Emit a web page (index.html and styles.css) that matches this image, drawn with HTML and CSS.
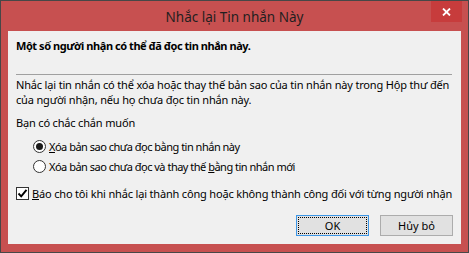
FILE: index.html
```html
<!DOCTYPE html>
<html lang="vi">
<head>
<meta charset="utf-8">
<title>Nhắc lại Tin nhắn Này</title>
<link rel="stylesheet" href="styles.css">
</head>
<body>
<div class="window">
  <div class="titlebar">
    <span class="spacer"></span>
    <span class="title">Nhắc lại Tin nhắn Này</span>
    <span class="controls">
      <span class="close" aria-label="Đóng">
        <svg width="9" height="8" viewBox="0 0 9 8"><path d="M1 0.5 L8 7.5 M8 0.5 L1 7.5" stroke="#fff" stroke-width="1.8" fill="none"/></svg>
      </span>
    </span>
  </div>
  <div class="content">
    <p class="lead">Một số người nhận có thể đã đọc tin nhắn này.</p>
    <div class="sep"></div>
    <p class="desc">Nhắc lại tin nhắn có thể xóa hoặc thay thế bản sao của tin nhắn này trong Hộp thư đến<br>của người nhận, nếu họ chưa đọc tin nhắn này.</p>
    <p class="question">Bạn có chắc chắn muốn</p>
    <div class="options">
      <div class="option"><span class="radio checked"></span><span class="label"><u>X</u>óa bản sao chưa đọc bằng tin nhắn này</span></div>
      <div class="option"><span class="radio"></span><span class="label">Xóa bản sao chưa đọc và thay thế <u>b</u>ằng tin nhắn mới</span></div>
    </div>
    <div class="check">
      <span class="checkbox"><svg width="11" height="11" viewBox="0 0 11 11"><path d="M1.5 5.5 L4.2 8.3 L9.5 1.8" stroke="#000" stroke-width="1.9" fill="none"/></svg></span>
      <span class="label"><u>B</u>áo cho tôi khi nhắc lại thành công hoặc không thành công đối với từng người nhận</span>
    </div>
    <div class="buttons">
      <div class="btn default"><span class="focus">OK</span></div>
      <div class="btn">Hủy bỏ</div>
    </div>
  </div>
</div>
</body>
</html>
```
FILE: styles.css
```css
* { box-sizing: border-box; }
html, body { margin: 0; padding: 0; background: #fff; }
body { font-family: "Noto Sans", "Open Sans", sans-serif; font-size: 11px; color: #000; }

.window {
  width: 469px;
  height: 253px;
  border: 1px solid #474747;
  background: #c75050;
  padding: 0 7px 8px 7px;
  display: flex;
  flex-direction: column;
}

.titlebar {
  height: 30px;
  display: grid;
  grid-template-columns: 1fr auto 1fr;
  align-items: start;
}
.title {
  font-size: 13.5px;
  line-height: 20px;
  margin-top: 6px;
  color: #1f1f1f;
  white-space: nowrap;
}
.controls { display: flex; justify-content: flex-end; margin-right: -1px; }
.close {
  width: 31px;
  height: 21px;
  background: #c73c3c;
  display: flex;
  align-items: center;
  justify-content: center;
}

.content {
  flex: 1;
  background: #f0f0f0;
  padding: 7px 8px 8px 8px;
  display: flex;
  flex-direction: column;
  line-height: 15px;
  white-space: nowrap;
  letter-spacing: -0.17px;
}
p { margin: 0; }
.lead { font-weight: bold; letter-spacing: -0.45px; }
.sep { height: 1px; background: #a0a0a0; margin: 21px 1px 2px 0; }
.desc { margin-top: 0; }
.question { margin-top: 8px; }

.options { margin-top: 9px; padding-left: 17px; display: flex; flex-direction: column; gap: 5px; }
.option { display: flex; align-items: center; gap: 3px; }
.option .label { letter-spacing: -0.5px; }
.radio {
  width: 13px; height: 13px; border-radius: 50%;
  border: 1px solid #333;
  background: #fff;
  display: flex; align-items: center; justify-content: center;
}
.radio.checked::after {
  content: "";
  width: 7px; height: 7px; border-radius: 50%;
  background: #1a1a1a;
}

.check { margin-top: 12px; display: flex; align-items: center; gap: 3px; }
.checkbox {
  width: 13px; height: 13px;
  border: 1px solid #333;
  background: #fff;
  display: flex; align-items: center; justify-content: center;
}

.buttons { margin-top: auto; display: flex; justify-content: flex-end; gap: 11px; letter-spacing: 0; }
.btn {
  width: 73px; height: 21px;
  border: 1px solid #acacac;
  background: #e1e1e1;
  display: flex; align-items: center; justify-content: center;
}
.btn.default { border-color: #3c96e6; padding: 1px; }
.btn .focus {
  width: 100%; height: 100%;
  border: 1px dotted #000;
  display: flex; align-items: center; justify-content: center;
}
```
